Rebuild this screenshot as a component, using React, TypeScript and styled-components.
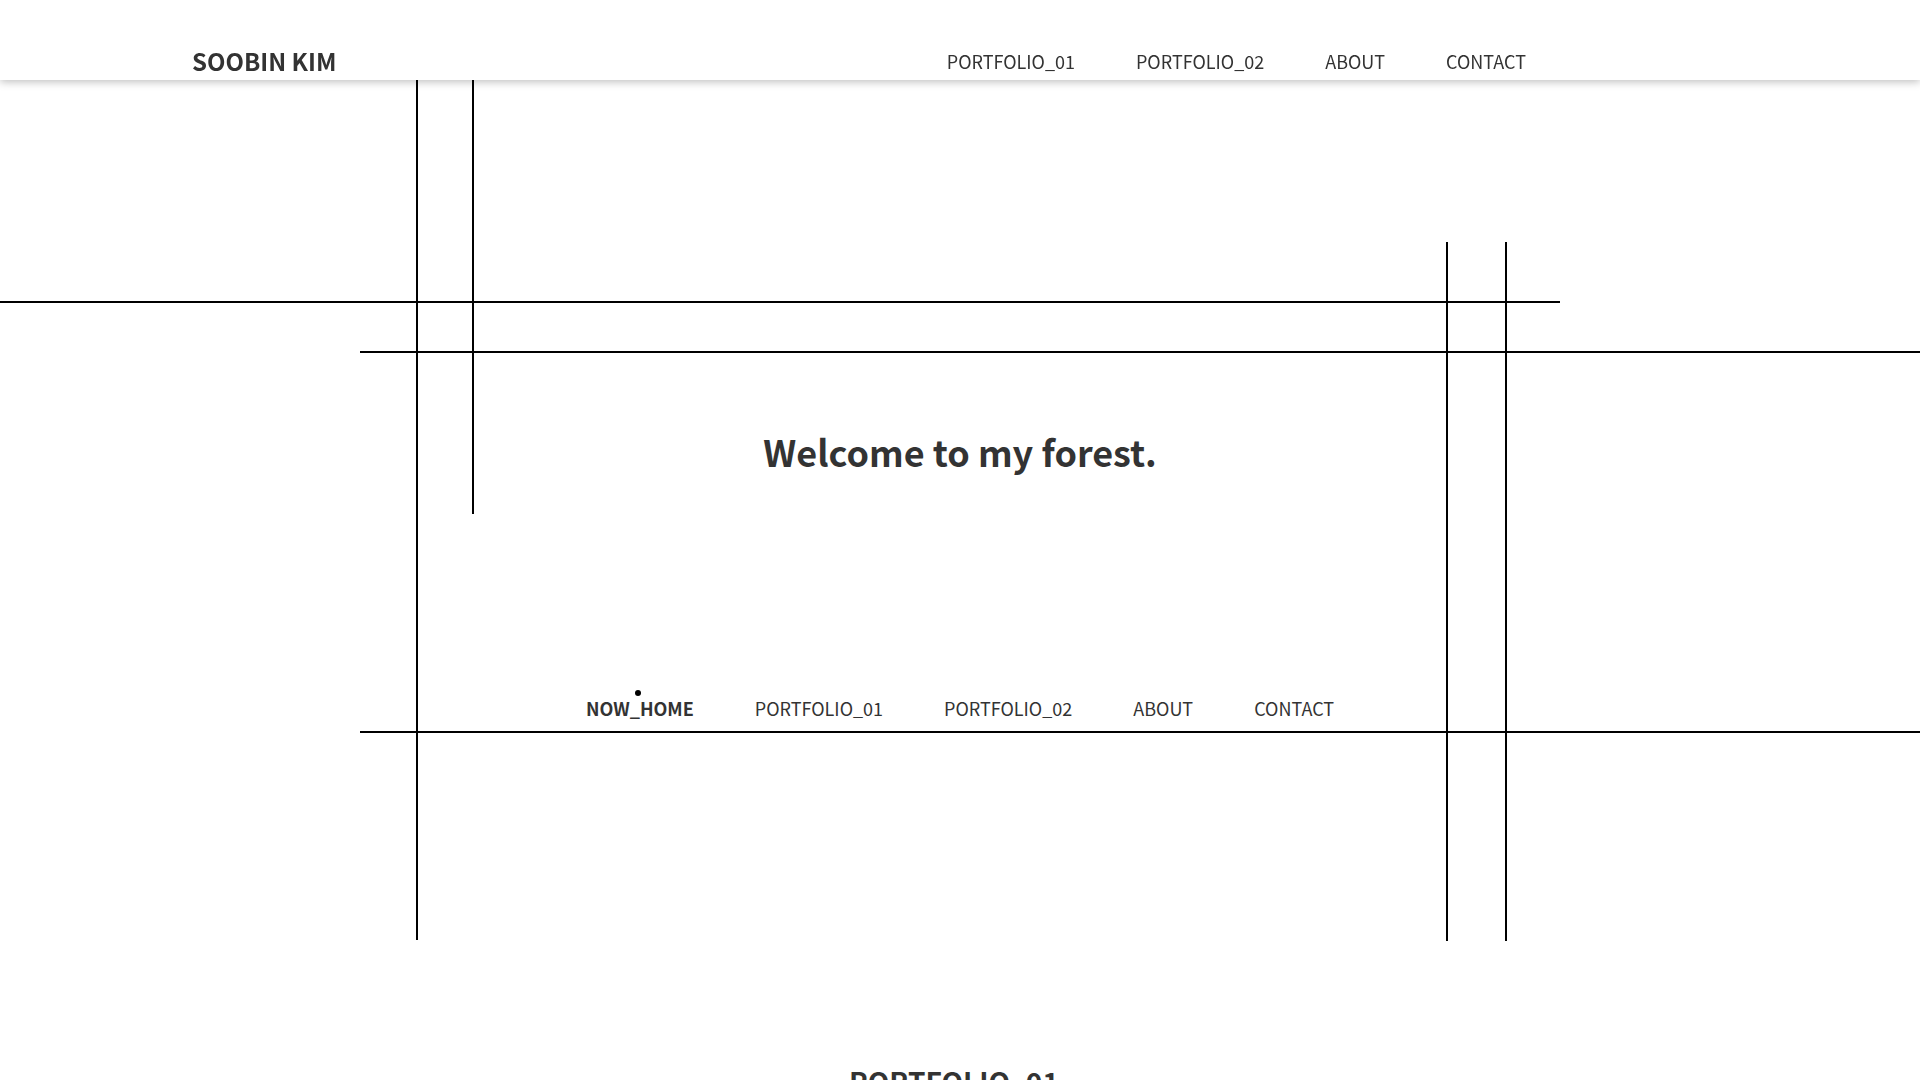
import styled, { createGlobalStyle } from "styled-components";

const GlobalStyle = createGlobalStyle`
  * {
    box-sizing: border-box;
  }
  body {
    margin: 0;
    background: #fff;
    color: #333;
    font-family: "Noto Sans CJK KR", "Noto Sans", sans-serif;
  }
  ul {
    margin: 0;
    padding: 0;
    list-style: none;
  }
  a {
    color: inherit;
    text-decoration: none;
  }
`;

const Header = styled.header`
  position: sticky;
  top: 0;
  z-index: 10;
  display: flex;
  align-items: center;
  height: 80px;
  padding: 42px 394px 0 192px;
  background: #fff;
  box-shadow: 0 2px 8px rgba(0, 0, 0, 0.25);
`;

const Logo = styled.h1`
  margin: 0 0 1px;
  font-size: 24px;
  font-weight: 700;
  line-height: 1;
`;

const Menu = styled.ul<{ $center?: boolean }>`
  display: flex;
  gap: 61px;
  margin-left: ${(p) => (p.$center ? "0" : "auto")};
  justify-content: center;
`;

const MenuItem = styled.li<{ $active?: boolean }>`
  position: relative;
  font-size: 18px;
  line-height: 1;
  font-weight: ${(p) => (p.$active ? 700 : 400)};

  &::before {
    content: "";
    display: ${(p) => (p.$active ? "block" : "none")};
    position: absolute;
    top: -9px;
    left: 50%;
    width: 6px;
    height: 6px;
    margin-left: -5px;
    border-radius: 50%;
    background: #000;
  }
`;

const Hero = styled.section`
  position: relative;
  height: 920px;
  padding-top: 353px;
  display: flex;
  flex-direction: column;
  align-items: center;
`;

// decorative frame lines over the hero
const Line = styled.span<{
  $top: number;
  $left: number;
  $w?: number;
  $h?: number;
  $toRight?: boolean;
}>`
  position: absolute;
  top: ${(p) => p.$top}px;
  left: ${(p) => p.$left}px;
  ${(p) => (p.$toRight ? "right: 0;" : `width: ${p.$w ?? 2}px;`)}
  height: ${(p) => p.$h ?? 2}px;
  background: #000;
`;

const Welcome = styled.h2`
  margin: 0 0 230px;
  font-size: 36px;
  font-weight: 700;
  line-height: 1;
`;

const Section = styled.section`
  padding-top: 67px;
  display: flex;
  justify-content: center;
`;

const SectionTitle = styled.h2`
  margin: 0;
  padding-right: 12px;
  font-size: 28px;
  font-weight: 700;
  line-height: 1;
`;

const items = ["PORTFOLIO_01", "PORTFOLIO_02", "ABOUT", "CONTACT"];

export default function App() {
  return (
    <>
      <GlobalStyle />
      <Header>
        <Logo>SOOBIN KIM</Logo>
        <Menu>
          {items.map((item) => (
            <MenuItem key={item}>
              <a href="#">{item}</a>
            </MenuItem>
          ))}
        </Menu>
      </Header>
      <Hero>
        <Line $top={0} $left={416} $h={860} />
        <Line $top={0} $left={472} $h={434} />
        <Line $top={162} $left={1446} $h={699} />
        <Line $top={162} $left={1505} $h={699} />
        <Line $top={221} $left={0} $w={1560} />
        <Line $top={271} $left={360} $toRight />
        <Line $top={651} $left={360} $toRight />
        <Welcome>Welcome to my forest.</Welcome>
        <Menu $center>
          <MenuItem $active>
            <a href="#">NOW_HOME</a>
          </MenuItem>
          {items.map((item) => (
            <MenuItem key={item}>
              <a href="#">{item}</a>
            </MenuItem>
          ))}
        </Menu>
      </Hero>
      <Section>
        <SectionTitle>PORTFOLIO_01</SectionTitle>
      </Section>
    </>
  );
}
